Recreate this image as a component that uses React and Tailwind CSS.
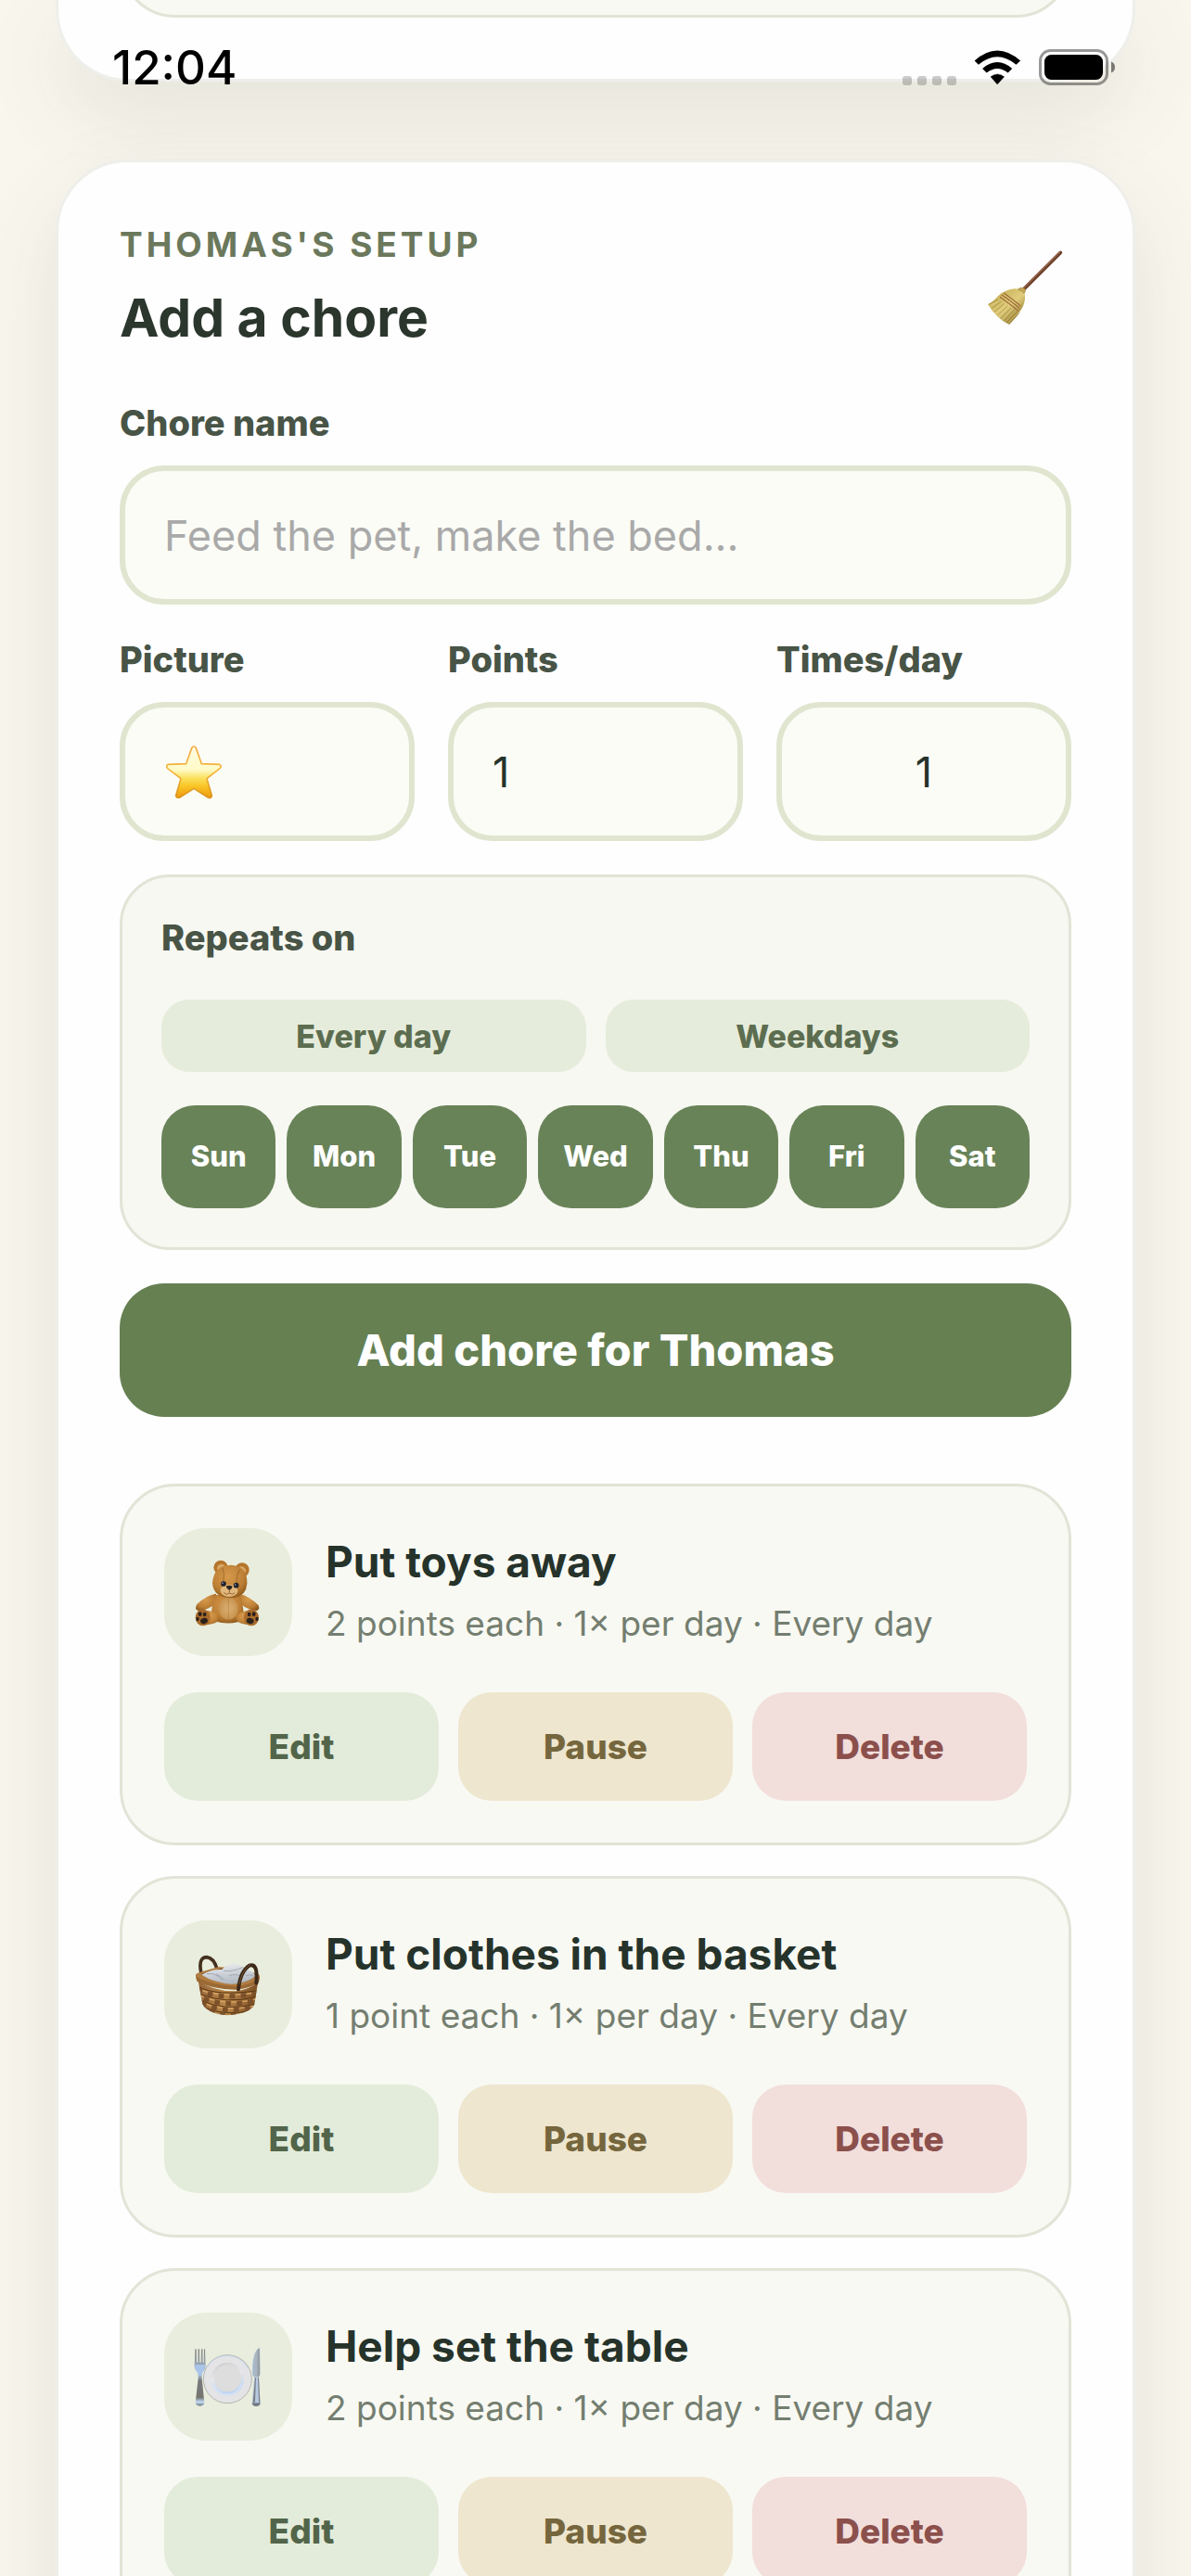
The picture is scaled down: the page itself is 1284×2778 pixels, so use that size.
import React, { useState } from "react";

function WifiIcon() {
  return (
    <svg viewBox="330 70 154 116" className="h-[38px] w-[51px]" aria-hidden="true">
      <path d="M331 105 L344 118 Q406 66 468 118 L482 105 Q406 38 331 105Z" fill="#000" />
      <path d="M357 131 L371 145 Q406 117 441 145 L455 131 Q406 89 357 131Z" fill="#000" />
      <path d="M384 158 Q406 140 429 158 L406 183Z" fill="#000" stroke="#000" strokeWidth="1" />
    </svg>
  );
}

function BatteryIcon() {
  return (
    <svg viewBox="0 0 84 40" className="h-[40px] w-[84px]" aria-hidden="true">
      <rect x="1.5" y="1.5" width="72" height="36" rx="11" fill="none" stroke="#000" strokeOpacity="0.4" strokeWidth="3" />
      <rect x="6" y="6" width="63" height="27" rx="7.5" fill="#000" />
      <path d="M78 13.5 Q82 15 82 19.5 Q82 24 78 25.5Z" fill="#000" fillOpacity="0.5" />
    </svg>
  );
}

function StatusBar() {
  return (
    <div className="absolute inset-x-0 top-[43px] z-10 flex h-[60px] items-center justify-between pr-[80px] pl-[121px]">
      <span className="text-[51px] leading-[60px] font-medium text-black">12:04</span>
      <div className="flex items-center">
        <div className="flex gap-[6px] self-end pb-[1px]">
          {[0, 1, 2, 3].map((n) => (
            <span key={n} className="size-[10px] rounded-[3px] bg-black/20" />
          ))}
        </div>
        <div className="ml-[19px] flex items-center gap-[19px]">
          <WifiIcon />
          <BatteryIcon />
        </div>
      </div>
    </div>
  );
}

function BroomIcon() {
  return (
    <svg viewBox="45 30 300 300" className="size-[100px]" aria-hidden="true">
      <defs>
        <linearGradient id="straw" x1="0.2" y1="0.1" x2="0.9" y2="0.9">
          <stop offset="0" stopColor="#c5b057" />
          <stop offset="0.5" stopColor="#e0cc7c" />
          <stop offset="1" stopColor="#8d7428" />
        </linearGradient>
      </defs>
      <path d="M192 185 L310 67" stroke="#6b4029" strokeWidth="11" strokeLinecap="round" />
      <path d="M191 182 L308 65" stroke="#966146" strokeWidth="4" strokeLinecap="round" />
      <path d="M138 189 Q160 181 177 186 Q193 190 195 206 Q197 228 184 250 Q168 278 144 300 Q101 280 75 234 Q90 228 108 208 Q120 195 138 189Z" fill="url(#straw)" />
      <path d="M174 184 Q185 176 197 186 Q198 193 192 200 Q185 188 174 188Z" fill="#c4a654" stroke="#8f7534" strokeWidth="1.5" />
      <path d="M78 235 L108 219 M87 248 L118 226 M96 259 L127 233 M106 270 L139 240 M116 281 L149 247 M126 289 L160 252 M135 295 L170 259 M144 298 L178 262" stroke="#80691f" strokeWidth="2.4" opacity="0.6" />
      <path d="M82 240 L112 223 M100 264 L134 237 M121 285 L155 250 M140 296 L174 261" stroke="#eedc90" strokeWidth="1.6" opacity="0.8" />
      <path d="M127 198 Q160 222 182 241 M120 204 Q152 226 178 248 M114 211 Q146 232 173 256" fill="none" stroke="#92552c" strokeWidth="3.6" strokeDasharray="4 1" />
    </svg>
  );
}

function StarIcon() {
  return (
    <svg viewBox="84 60 192 192" className="size-[64px]" aria-hidden="true">
      <defs>
        <linearGradient id="starFill" x1="0" y1="0" x2="0" y2="1">
          <stop offset="0" stopColor="#fffbe0" />
          <stop offset="0.45" stopColor="#fffbc8" />
          <stop offset="0.62" stopColor="#fbe05c" />
          <stop offset="0.78" stopColor="#f9c424" />
          <stop offset="1" stopColor="#ee9912" />
        </linearGradient>
        <linearGradient id="starEdge" x1="0" y1="0" x2="0" y2="1">
          <stop offset="0" stopColor="#f6a941" />
          <stop offset="0.5" stopColor="#f3b53c" />
          <stop offset="1" stopColor="#d9921a" />
        </linearGradient>
      </defs>
      <path
        d="M173 80 Q180 70 187 80 L205 131 L262 133 Q272 139 264 146 L222 179 L238 234 Q236 244 226 240 L180 211 L134 240 Q124 243 122 234 L138 179 L95 146 Q88 138 97 133 L155 131Z"
        fill="url(#starFill)"
        stroke="url(#starEdge)"
        strokeWidth="5"
        strokeLinejoin="round"
      />
    </svg>
  );
}

function BearIcon() {
  return (
    <svg viewBox="22 24 414 414" className="size-full" aria-hidden="true">
      <defs>
        <radialGradient id="fur" cx="0.45" cy="0.35" r="0.7">
          <stop offset="0" stopColor="#d69a4c" />
          <stop offset="0.65" stopColor="#bd7f35" />
          <stop offset="1" stopColor="#8d5719" />
        </radialGradient>
        <radialGradient id="tummy">
          <stop offset="0" stopColor="#dcb172" />
          <stop offset="1" stopColor="#c89451" />
        </radialGradient>
      </defs>
      <path d="M190 236 Q160 240 128 270 Q118 286 132 291 Q160 290 186 270Z" fill="url(#fur)" />
      <path d="M266 236 Q296 244 326 272 Q333 286 322 291 Q292 288 270 270Z" fill="url(#fur)" />
      <circle cx="205" cy="151" r="23" fill="#b5752b" />
      <circle cx="207" cy="154" r="14" fill="#d8a765" />
      <circle cx="274" cy="159" r="23" fill="#b5752b" />
      <circle cx="272" cy="162" r="14" fill="#d8a765" />
      <path d="M188 240 Q170 285 178 320 Q226 342 278 322 Q282 280 266 240Z" fill="url(#fur)" />
      <ellipse cx="230" cy="284" rx="31" ry="35" fill="url(#tummy)" />
      <path d="M230 250 V318" stroke="#a9753a" strokeWidth="1.6" />
      <path d="M178 202 Q182 144 238 143 Q292 146 290 204 Q286 250 234 250 Q182 248 178 202Z" fill="url(#fur)" />
      <path d="M211 152 Q219 172 213 198 M266 158 Q254 176 256 200" fill="none" stroke="#8a5a22" strokeWidth="2" />
      <ellipse cx="232" cy="226" rx="28" ry="20" fill="#e0b77c" />
      <path d="M222 212 Q232 207 243 212 Q242 221 233 225 Q224 221 222 212Z" fill="#2c2622" />
      <path d="M233 225 V233 M215 233 Q224 242 233 234 Q242 242 250 233" fill="none" stroke="#8a5228" strokeWidth="2.5" />
      <circle cx="214" cy="204" r="8.5" fill="#22222e" />
      <circle cx="255" cy="209" r="8.5" fill="#22222e" />
      <circle cx="211" cy="202" r="2.2" fill="#aab7e6" />
      <circle cx="252" cy="207" r="2.2" fill="#aab7e6" />
      <path d="M150 290 Q190 290 200 310 Q200 330 176 334 L150 338Z" fill="url(#fur)" />
      <path d="M304 290 Q266 290 254 310 Q254 330 278 334 L304 338Z" fill="url(#fur)" />
      <ellipse cx="147" cy="313" rx="24" ry="27" fill="#a96b2c" />
      <ellipse cx="304" cy="313" rx="24" ry="27" fill="#a96b2c" />
      <g fill="#2b211b">
        <ellipse cx="151" cy="324" rx="12" ry="9" transform="rotate(-15 151 324)" />
        <ellipse cx="130" cy="318" rx="5" ry="6.5" />
        <ellipse cx="138" cy="302" rx="6" ry="7" />
        <ellipse cx="153" cy="303" rx="5.5" ry="7" />
        <ellipse cx="300" cy="324" rx="12" ry="9" transform="rotate(15 300 324)" />
        <ellipse cx="322" cy="318" rx="5" ry="6.5" />
        <ellipse cx="297" cy="303" rx="5.5" ry="7" />
        <ellipse cx="312" cy="302" rx="6" ry="7" />
      </g>
    </svg>
  );
}

function BasketIcon() {
  return (
    <svg viewBox="22 33 414 414" className="size-full" aria-hidden="true">
      <defs>
        <linearGradient id="wicker" x1="0" y1="0" x2="1" y2="0">
          <stop offset="0" stopColor="#96673a" />
          <stop offset="0.45" stopColor="#b98649" />
          <stop offset="1" stopColor="#7d5024" />
        </linearGradient>
        <linearGradient id="cloth" x1="0" y1="0" x2="0.3" y2="1">
          <stop offset="0" stopColor="#eef0f3" />
          <stop offset="1" stopColor="#b4bbc4" />
        </linearGradient>
        <clipPath id="basketBody">
          <path d="M132 228 Q180 262 250 262 Q296 258 325 234 L314 304 Q304 334 226 340 Q164 336 146 304Z" />
        </clipPath>
      </defs>
      <path d="M141 200 Q132 152 160 152 Q182 154 193 190" fill="none" stroke="#45301f" strokeWidth="11" strokeLinecap="round" />
      <path d="M132 228 Q180 262 250 262 Q296 258 325 234 L314 304 Q304 334 226 340 Q164 336 146 304Z" fill="url(#wicker)" />
      <g clipPath="url(#basketBody)" fill="none">
        <path d="M130 246 Q190 280 325 260 M134 270 Q220 306 322 280 M140 292 Q220 328 318 304 M150 314 Q220 346 312 322" stroke="#5b3716" strokeWidth="3" />
        <path d="M130 256 Q190 292 325 270" stroke="#7b5029" strokeWidth="15" strokeDasharray="17 19" />
        <path d="M134 280 Q220 318 322 292" stroke="#7b5029" strokeWidth="15" strokeDasharray="17 19" strokeDashoffset="18" />
        <path d="M142 302 Q220 338 318 313" stroke="#7b5029" strokeWidth="15" strokeDasharray="17 19" />
        <path d="M150 322 Q220 352 310 330" stroke="#7b5029" strokeWidth="13" strokeDasharray="17 19" strokeDashoffset="18" />
        <path d="M130 252 Q190 286 325 266" stroke="#d3a062" strokeWidth="5" strokeDasharray="17 19" strokeDashoffset="18" />
        <path d="M134 275 Q220 312 322 287" stroke="#d3a062" strokeWidth="5" strokeDasharray="17 19" />
        <path d="M142 297 Q220 332 318 308" stroke="#d3a062" strokeWidth="5" strokeDasharray="17 19" strokeDashoffset="18" />
      </g>
      <path d="M124 212 Q122 206 134 202 L196 184 Q226 180 320 205 Q333 208 331 218 L328 232 Q300 250 256 253 Q184 256 128 228Z" fill="#b17c41" />
      <path d="M124 214 Q170 242 250 246 Q300 244 330 216 L328 234 Q300 254 250 257 Q180 256 128 230Z" fill="#9b6934" />
      <path d="M142 208 Q156 198 212 188 Q280 188 318 210 Q300 234 242 238 Q190 236 142 208Z" fill="#5a3a1e" />
      <path d="M143 209 Q172 190 208 192 Q222 176 246 173 Q270 175 280 188 Q308 196 318 212 Q292 236 240 239 Q182 234 143 209Z" fill="url(#cloth)" />
      <path d="M160 206 Q186 200 210 226 M190 206 Q210 216 216 226 M214 196 Q244 200 278 184 M232 212 Q256 204 268 214 M286 212 Q304 206 312 214" fill="none" stroke="#a0a8b2" strokeWidth="3" />
      <path d="M262 256 Q268 196 300 178 Q326 172 320 236" fill="none" stroke="#3c2919" strokeWidth="12" strokeLinecap="round" />
      <path d="M264 240 Q274 194 300 176" fill="none" stroke="#705034" strokeWidth="3" />
    </svg>
  );
}

function PlateIcon() {
  return (
    <svg viewBox="22 42 414 414" className="size-full" aria-hidden="true">
      <defs>
        <linearGradient id="steel" x1="0" y1="0" x2="0" y2="1">
          <stop offset="0" stopColor="#85857f" />
          <stop offset="0.3" stopColor="#9ba9b8" />
          <stop offset="0.42" stopColor="#bcd5f3" />
          <stop offset="0.55" stopColor="#77797c" />
          <stop offset="0.85" stopColor="#77756f" />
          <stop offset="0.93" stopColor="#c4dcf8" />
          <stop offset="1" stopColor="#6c747e" />
        </linearGradient>
        <linearGradient id="blade" x1="0" y1="0" x2="1" y2="0">
          <stop offset="0" stopColor="#a9bccd" />
          <stop offset="0.6" stopColor="#a8b2bd" />
          <stop offset="1" stopColor="#84898c" />
        </linearGradient>
        <linearGradient id="well" x1="0" y1="0" x2="0.3" y2="1">
          <stop offset="0" stopColor="#c8c8c8" />
          <stop offset="0.5" stopColor="#e8e8ea" />
          <stop offset="1" stopColor="#bdd3ef" />
        </linearGradient>
      </defs>
      <path d="M122 160 H126 L127 203 H131 L132 160 H136 L137 203 H141 L142 160 H146 L147 203 H150 L151 160 H154 L156 216 Q156 226 148 234 Q143 240 144 254 L152 334 Q150 344 138 344 Q125 344 123 334 L132 254 Q133 240 128 234 Q120 226 120 216Z" fill="url(#steel)" />
      <path d="M122 210 H154 Q154 226 146 233 L142 246 H134 L130 233 Q122 226 122 210Z" fill="#a9c5ea" />
      <circle cx="227" cy="257" r="78" fill="#e4e4e6" stroke="#a9aaa6" strokeWidth="2.5" />
      <path d="M160 220 Q182 182 226 181 Q270 182 292 220" fill="none" stroke="#c3d5ea" strokeWidth="3" />
      <circle cx="227" cy="257" r="53" fill="url(#well)" />
      <circle cx="227" cy="254" r="44" fill="#dddddd" />
      <path d="M178 270 Q190 306 227 307 Q262 305 274 272" fill="none" stroke="#d3e3f8" strokeWidth="5" />
      <path d="M331 156 Q318 160 312 184 Q306 206 307 240 Q308 250 315 251 H328 Q332 246 332 238Z" fill="url(#blade)" stroke="#c8dcf0" strokeWidth="1.5" />
      <path d="M313 252 H328 L333 336 Q330 345 319 345 Q308 345 306 336Z" fill="#b7cae0" />
      <path d="M316 252 H319 L316 332 H309Z M325 252 H328 L332 332 H328Z" fill="#7b8086" />
      <path d="M306 334 H333 Q333 345 319 345 Q307 345 306 334Z" fill="#747c85" />
    </svg>
  );
}

const FIELD =
  "h-[150px] w-full min-w-0 rounded-[48px] border-[6px] border-[#e0e5cf] bg-[#fbfcf6] px-[42px] text-[45px] text-[#26332b] outline-none placeholder:text-[#a9a9a9] placeholder:opacity-100";
const LABEL = "mb-[23px] block text-[38px] leading-[46px] font-extrabold text-[#485446]";

const DAYS = ["Sun", "Mon", "Tue", "Wed", "Thu", "Fri", "Sat"];

const CHORES = [
  { title: "Put toys away", detail: "2 points each · 1× per day · Every day", Icon: BearIcon },
  { title: "Put clothes in the basket", detail: "1 point each · 1× per day · Every day", Icon: BasketIcon },
  { title: "Help set the table", detail: "2 points each · 1× per day · Every day", Icon: PlateIcon },
];

function ChoreCard({ title, detail, Icon }) {
  const action = "h-[117px] rounded-[36px] text-[37px] font-extrabold";
  return (
    <li className="rounded-[60px] border-[3px] border-[#e1e4d6] bg-[#f8f9f3] p-[45px]">
      <div className="flex items-center gap-[36px]">
        <div className="size-[138px] shrink-0 rounded-[45px] bg-[#e9eddd]">
          <Icon />
        </div>
        <div className="min-w-0 flex-1">
          <h3 className="text-[46px] leading-[68px] font-bold text-[#26332b]">{title}</h3>
          <p className="text-[37px] leading-[66px] text-[#747e70]">{detail}</p>
        </div>
      </div>
      <div className="mt-[39px] grid grid-cols-3 gap-[21px]">
        <button type="button" className={action + " bg-[#e3ecda] text-[#52654a]"}>Edit</button>
        <button type="button" className={action + " bg-[#eee6ce] text-[#75663e]"}>Pause</button>
        <button type="button" className={action + " bg-[#f2dedb] text-[#8c504c]"}>Delete</button>
      </div>
    </li>
  );
}

export default function App() {
  const [name, setName] = useState("");
  const [points, setPoints] = useState("1");
  const [times, setTimes] = useState("1");
  const card = "border-[3px] border-[#eeefeb] bg-[#fefefe] px-[66px] shadow-[0_36px_90px_rgba(70,90,60,0.12)]";

  return (
    <div className="relative h-screen overflow-hidden bg-[#f9f6ee] px-[60px] font-['Inter',sans-serif]">
      <StatusBar />

      <section className={card + " flex h-[88px] flex-col justify-end rounded-b-[78px] border-t-0 pb-[66px]"}>
        <div className="h-[120px] shrink-0 rounded-[60px] border-[3px] border-[#e1e4d6] bg-[#f8f9f3]" />
      </section>

      <section className={card + " mt-[84px] rounded-[78px] py-[66px]"}>
        <header className="mb-[54px] flex items-center justify-between">
          <div>
            <p className="text-[37px] leading-[46px] font-bold tracking-[4px] text-[#6b785c]">THOMAS'S SETUP</p>
            <h2 className="mt-[20px] text-[57px] leading-[72px] font-bold text-[#2b362d]">Add a chore</h2>
          </div>
          <BroomIcon />
        </header>

        <form className="flex flex-col gap-[36px]" onSubmit={(e) => e.preventDefault()}>
          <div>
            <label htmlFor="chore-name" className={LABEL}>Chore name</label>
            <input
              id="chore-name"
              type="text"
              placeholder="Feed the pet, make the bed..."
              value={name}
              onChange={(e) => setName(e.target.value)}
              className={FIELD}
            />
          </div>

          <div className="grid grid-cols-3 gap-[36px]">
            <div>
              <label htmlFor="picture" className={LABEL}>Picture</label>
              <button id="picture" type="button" aria-label="Picture: star" className={FIELD + " flex items-center"}>
                <StarIcon />
              </button>
            </div>
            <div>
              <label htmlFor="points" className={LABEL}>Points</label>
              <input id="points" type="text" inputMode="numeric" value={points} onChange={(e) => setPoints(e.target.value)} className={FIELD} />
            </div>
            <div>
              <label htmlFor="times" className={LABEL}>Times/day</label>
              <input id="times" type="text" inputMode="numeric" value={times} onChange={(e) => setTimes(e.target.value)} className={FIELD + " text-center"} />
            </div>
          </div>

          <fieldset className="rounded-[54px] border-[3px] border-[#e1e4d6] bg-[#f7f8f2] p-[42px]" aria-labelledby="repeats">
            <p id="repeats" className="mb-[44px] text-[38px] leading-[46px] font-extrabold text-[#485446]">Repeats on</p>
            <div className="grid grid-cols-2 gap-[21px]">
              {["Every day", "Weekdays"].map((label) => (
                <button key={label} type="button" className="h-[78px] rounded-[30px] bg-[#e6ecdb] text-[34px] font-extrabold text-[#5c6d50]">
                  {label}
                </button>
              ))}
            </div>
            <div className="mt-[36px] grid grid-cols-7 gap-[12px]">
              {DAYS.map((day) => (
                <button key={day} type="button" aria-pressed="true" className="h-[111px] rounded-[36px] bg-[#698359] text-[31px] font-extrabold text-white">
                  {day}
                </button>
              ))}
            </div>
          </fieldset>

          <button type="submit" className="h-[144px] rounded-[48px] bg-[#668052] text-[47px] font-extrabold text-white">
            Add chore for Thomas
          </button>
        </form>

        <ul className="mt-[72px] flex flex-col gap-[33px]">
          {CHORES.map((chore) => (
            <ChoreCard key={chore.title} {...chore} />
          ))}
        </ul>
      </section>
    </div>
  );
}
